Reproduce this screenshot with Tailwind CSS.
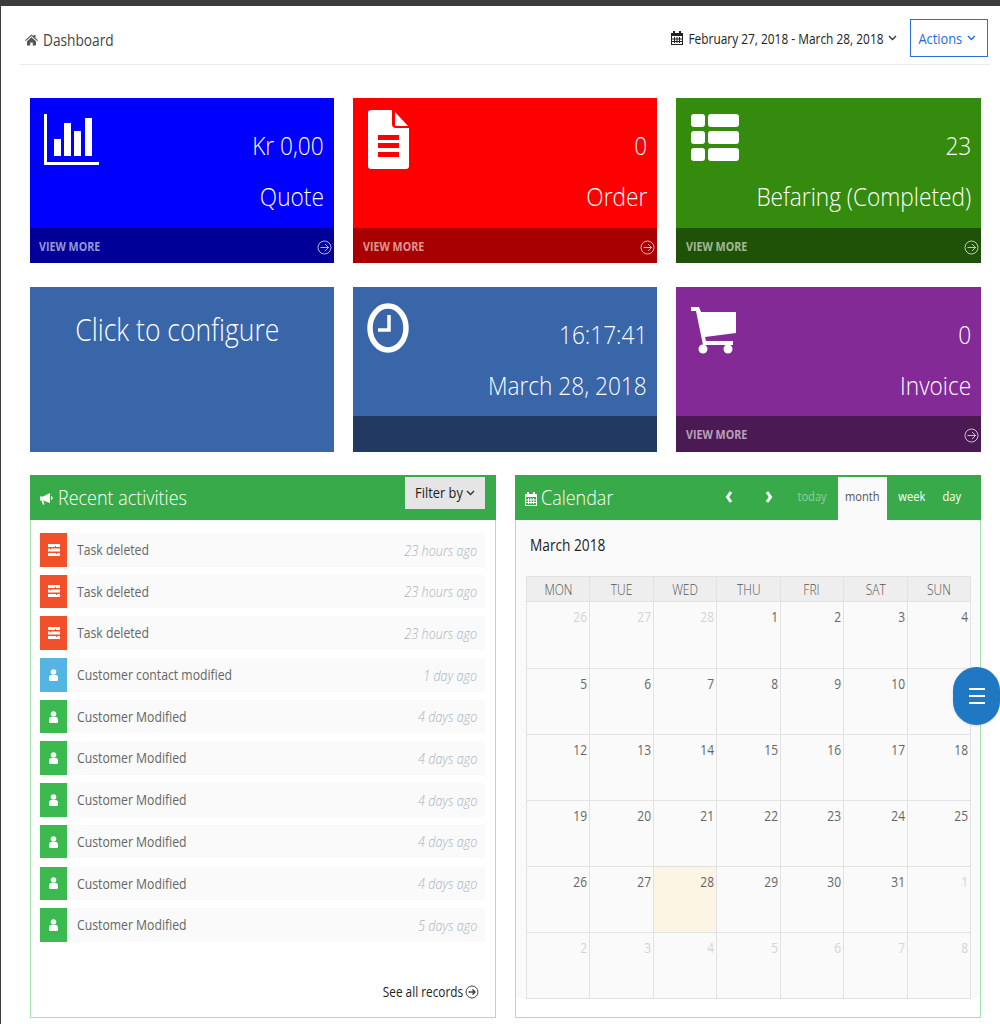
<!DOCTYPE html>
<html lang="en">
<head>
<meta charset="UTF-8">
<title>Dashboard</title>
<script src="https://cdn.jsdelivr.net/npm/@tailwindcss/browser@4"></script>
</head>
<body class="bg-white font-['Open_Sans',sans-serif] text-[#333] overflow-hidden">
<div class="relative w-[1000px] h-[1024px] overflow-hidden border-l border-[#3d3d3d]">
  <div class="h-[6px] bg-[#3d3d3d] -ml-px"></div>
  <!-- sliver of the side menu -->
  <div class="absolute -left-px top-[29px] w-px h-[12px] bg-[#e74c3c]"></div>
  <div class="absolute -left-px top-[67px] w-px h-[11px] bg-[#e74c3c]"></div>
  <!-- page head -->
  <div class="ml-[19px] w-[970px] h-[59px] border-b border-[#e7ecf1] flex items-center justify-between">
    <div class="flex items-center gap-[5px] pl-[5px] pt-[9px] text-[16px] text-[#444]">
      <svg class="w-[13px] h-[12px] fill-[#555]" viewBox="0 0 26 24"><path d="M13 1 0 12.500l1.500 1.700L13 4l11.500 10.200 1.500-1.700L21 8V2h-4v2.500zM4 14.500V23h6.500v-6h5v6H22v-8.500L13 6.500z"/></svg>
      <span class="inline-block whitespace-nowrap origin-left scale-x-[.855]">Dashboard</span>
    </div>
    <div class="flex items-center pt-[6px] pr-[2px]">
      <svg class="w-[12px] h-[14px] fill-[#222] -mr-[29px]" viewBox="0 0 12 14"><path d="M0 2h2V0h2v2h4V0h2v2h2v12H0zM1 5v8h10V5zM3 6h1v6H3zM5.500 6h1v6h-1zM8 6h1v6H8zM1 7.500h10v1H1zM1 10h10v1H1z"/></svg>
      <span class="inline-block whitespace-nowrap origin-right scale-x-[.85] text-[14px] text-[#222]">February 27, 2018 - March 28, 2018</span>
      <svg class="w-[9px] h-[6px] ml-[5px] mr-[13px] stroke-[#333] fill-none" stroke-width="1.400" viewBox="0 0 9 6"><path d="M1 1l3.500 3.500L8 1"/></svg>
      <div class="w-[78px] h-[38px] border-[1.500px] border-[#2a6fe0] flex items-center justify-end pr-[11px] gap-[5px] text-[15px] text-[#1f6ae8]">
        <span class="inline-block whitespace-nowrap origin-right scale-x-[.855]">Actions</span>
        <svg class="w-[9px] h-[6px] stroke-[#1f6ae8] fill-none" stroke-width="1.400" viewBox="0 0 9 6"><path d="M1 1l3.500 3.500L8 1"/></svg>
      </div>
    </div>
  </div>

  <div class="ml-[29px] w-[951px] mt-[33px]">
    <!-- tiles -->
    <div class="grid grid-cols-[304px_304px_305px] gap-x-[19px] gap-y-[24px]">
      <div class="h-[165px] bg-[#0000ff] flex flex-col text-white">
        <div class="flex-1 relative flex flex-col items-end pr-[10px] pt-[29px] text-[26.500px] font-light leading-[36px] gap-[15px]">
          <svg class="absolute left-[14px] top-[16px] w-[55px] h-[51px] fill-white" viewBox="0 0 55 51"><path d="M0 0h3v48h52v3H0zM10 25h7v17h-7zM20 9h7v33h-7zM30 17h7v25h-7zM41 4h7v38h-7z"/></svg>
          <span class="inline-block whitespace-nowrap origin-right scale-x-[.855]">Kr 0,00</span><span class="inline-block whitespace-nowrap origin-right scale-x-[.855]">Quote</span>
        </div>
        <div class="h-[35px] bg-[#000099] flex items-center justify-between pl-[9px] pr-[2px] pt-[3px] text-[12.500px] font-bold text-white/60">
          <span class="inline-block whitespace-nowrap origin-left scale-x-[.855]">VIEW MORE</span>
          <svg class="w-[15px] h-[15px] stroke-white/70 fill-none" viewBox="0 0 15 15"><circle cx="7.500" cy="7.500" r="6.500"/><path d="M3.500 7.500h8M8 4l3.500 3.500L8 11"/></svg>
        </div>
      </div>
      <div class="h-[165px] bg-[#ff0000] flex flex-col text-white">
        <div class="flex-1 relative flex flex-col items-end pr-[10px] pt-[29px] text-[26.500px] font-light leading-[36px] gap-[15px]">
          <svg class="absolute left-[15px] top-[12px] w-[41px] h-[59px] fill-white" viewBox="0 0 41 59"><path fill-rule="evenodd" d="M3 0h21v14a4 4 0 0 0 4 4h13v38a3 3 0 0 1-3 3H3a3 3 0 0 1-3-3V3a3 3 0 0 1 3-3zM10 25v5h21v-5zM10 33v5h21v-5zM10 42v5h21v-5z"/><path d="M27 2l13 14H27z"/></svg>
          <span class="inline-block whitespace-nowrap origin-right scale-x-[.855]">0</span><span class="inline-block whitespace-nowrap origin-right scale-x-[.855]">Order</span>
        </div>
        <div class="h-[35px] bg-[#a80000] flex items-center justify-between pl-[10px] pr-[2px] pt-[3px] text-[12.500px] font-bold text-white/60">
          <span class="inline-block whitespace-nowrap origin-left scale-x-[.855]">VIEW MORE</span>
          <svg class="w-[15px] h-[15px] stroke-white/70 fill-none" viewBox="0 0 15 15"><circle cx="7.500" cy="7.500" r="6.500"/><path d="M3.500 7.500h8M8 4l3.500 3.500L8 11"/></svg>
        </div>
      </div>
      <div class="h-[165px] bg-[#358b0d] flex flex-col text-white">
        <div class="flex-1 relative flex flex-col items-end pr-[10px] pt-[29px] text-[26.500px] font-light leading-[36px] gap-[15px]">
          <svg class="absolute left-[15px] top-[16px] w-[48px] h-[47px] fill-white" viewBox="0 0 48 47"><rect width="14" height="13" rx="3"/><rect x="17" width="31" height="13" rx="3"/><rect y="17" width="14" height="13" rx="3"/><rect x="17" y="17" width="31" height="13" rx="3"/><rect y="34" width="14" height="13" rx="3"/><rect x="17" y="34" width="31" height="13" rx="3"/></svg>
          <span class="inline-block whitespace-nowrap origin-right scale-x-[.855]">23</span><span class="inline-block whitespace-nowrap origin-right scale-x-[.855]">Befaring (Completed)</span>
        </div>
        <div class="h-[35px] bg-[#1f5206] flex items-center justify-between pl-[10px] pr-[2px] pt-[3px] text-[12.500px] font-bold text-white/60">
          <span class="inline-block whitespace-nowrap origin-left scale-x-[.855]">VIEW MORE</span>
          <svg class="w-[15px] h-[15px] stroke-white/70 fill-none" viewBox="0 0 15 15"><circle cx="7.500" cy="7.500" r="6.500"/><path d="M3.500 7.500h8M8 4l3.500 3.500L8 11"/></svg>
        </div>
      </div>
      <div class="h-[165px] bg-[#3966a8] flex justify-center pt-[22px] pr-[10px] text-[31px] leading-[40px] font-light text-white">
        <span class="inline-block h-fit whitespace-nowrap origin-center scale-x-[.855]">Click to configure</span>
      </div>
      <div class="h-[165px] bg-[#3966a8] flex flex-col text-white">
        <div class="flex-1 relative flex flex-col items-end pr-[10px] pt-[29px] text-[26.500px] font-light leading-[36px] gap-[15px]">
          <svg class="absolute left-[14px] top-[16px] w-[42px] h-[50px] fill-none stroke-white" viewBox="0 0 42 50"><ellipse cx="21" cy="25" rx="18" ry="22" stroke-width="5.500"/><path d="M22 12v15H11" stroke-width="3.500"/></svg>
          <span class="inline-block whitespace-nowrap origin-right scale-x-[.855]">16:17:41</span><span class="inline-block whitespace-nowrap origin-right scale-x-[.855]">March 28, 2018</span>
        </div>
        <div class="h-[36px] bg-[#223a62]"></div>
      </div>
      <div class="h-[165px] bg-[#842a96] flex flex-col text-white">
        <div class="flex-1 relative flex flex-col items-end pr-[10px] pt-[29px] text-[26.500px] font-light leading-[36px] gap-[15px]">
          <svg class="absolute left-[15px] top-[20px] w-[46px] h-[47px] fill-white" viewBox="0 0 46 47"><path d="M0 0h8l2 5h35v21l-31 4 1 4h27v4H12L5 4H0z"/><circle cx="12" cy="42" r="4.500"/><circle cx="37" cy="42" r="4.500"/></svg>
          <span class="inline-block whitespace-nowrap origin-right scale-x-[.855]">0</span><span class="inline-block whitespace-nowrap origin-right scale-x-[.855]">Invoice</span>
        </div>
        <div class="h-[36px] bg-[#4b1a54] flex items-center justify-between pl-[10px] pr-[2px] pt-[3px] text-[12.500px] font-bold text-white/60">
          <span class="inline-block whitespace-nowrap origin-left scale-x-[.855]">VIEW MORE</span>
          <svg class="w-[15px] h-[15px] stroke-white/70 fill-none" viewBox="0 0 15 15"><circle cx="7.500" cy="7.500" r="6.500"/><path d="M3.500 7.500h8M8 4l3.500 3.500L8 11"/></svg>
        </div>
      </div>
    </div>

    <!-- panels -->
    <div class="grid grid-cols-2 gap-x-[19px] mt-[23px]">
      <div class="h-[543px] border border-[#a3e6ad] flex flex-col">
        <div class="h-[45px] bg-[#38aa4a] flex items-start justify-between pl-[10px] pr-[11px] -m-px mb-0">
          <div class="flex items-center gap-[5px] h-[45px] text-white text-[21px] font-light">
            <svg class="w-[13px] h-[12px] fill-white mt-[3px]" viewBox="0 0 13 12"><path d="M0 3.500h3l7-3.500v10L3 7.500 4.500 11 3 12 1.500 7.500H0zM11 2.500l2 2.500-2 2.500z"/></svg>
            <span class="inline-block whitespace-nowrap origin-left scale-x-[.855]">Recent activities</span>
          </div>
          <div class="mt-[2px] w-[80px] h-[32px] bg-[#e5e5e5] flex items-center justify-end pr-[10px] pb-[1px] gap-[3px] text-[15px] text-[#222]">
            <span class="inline-block whitespace-nowrap origin-right scale-x-[.855]">Filter by</span>
            <svg class="w-[9px] h-[6px] stroke-[#333] fill-none" stroke-width="1.400" viewBox="0 0 9 6"><path d="M1 1l3.500 3.500L8 1"/></svg>
          </div>
        </div>
        <div id="feed" class="flex-1 flex flex-col gap-[8.200px] pt-[13px] pl-[9px] pr-[10px]"></div>
        <div class="h-[36px] flex items-start justify-end gap-[2px] pr-[16px] text-[14px] text-[#222]">
          <span class="inline-block whitespace-nowrap origin-right scale-x-[.845]">See all records</span>
          <svg class="w-[14px] h-[14px] mt-[4px] stroke-[#444] fill-none" viewBox="0 0 14 14"><circle cx="7" cy="7" r="6"/><path d="M3.500 7h7M7.500 4.500 10 7l-2.500 2.500" stroke-width="1.500"/></svg>
        </div>
      </div>

      <div class="h-[543px] border border-[#a3e6ad] flex flex-col">
        <div class="h-[45px] bg-[#38aa4a] flex items-end -m-px mb-0 pl-[10px] pr-[10px]">
          <div class="flex items-center gap-[4px] h-[45px] text-white text-[21px] font-light">
            <svg class="w-[12px] h-[14px] fill-white mt-[3px]" viewBox="0 0 12 14"><path d="M0 2h2V0h2v2h4V0h2v2h2v12H0zM1 5v8h10V5zM3 6h1v6H3zM5.500 6h1v6h-1zM8 6h1v6H8zM1 7.500h10v1H1zM1 10h10v1H1z"/></svg>
            <span class="inline-block whitespace-nowrap origin-left scale-x-[.855]">Calendar</span>
          </div>
          <div class="ml-auto flex items-end text-[13px] text-white h-[43px]">
            <div class="w-[41px] h-[43px] flex items-center justify-center"><svg class="w-[8px] h-[12px] stroke-white fill-none ml-[4px] mb-[4px]" stroke-width="3" viewBox="0 0 8 12"><path d="M6 1 2.500 6 6 11"/></svg></div>
            <div class="w-[41px] h-[43px] flex items-center justify-center"><svg class="w-[8px] h-[12px] stroke-white fill-none ml-[2px] mb-[4px]" stroke-width="3" viewBox="0 0 8 12"><path d="M2 1l3.500 5L2 11"/></svg></div>
            <div class="w-[50px] h-[43px] flex items-center justify-center pb-[3px] pr-[1px] text-white/45"><span class="inline-block scale-x-[.855]">today</span></div>
            <div class="w-[49px] h-[43px] flex items-center justify-center pb-[3px] bg-[#fafafa] text-[#555]"><span class="inline-block scale-x-[.855]">month</span></div>
            <div class="w-[47px] h-[43px] flex items-center justify-center pb-[3px] pl-[2px]"><span class="inline-block scale-x-[.855]">week</span></div>
            <div class="w-[37px] h-[43px] flex items-center justify-center pb-[3px] pr-[2px]"><span class="inline-block scale-x-[.855]">day</span></div>
          </div>
        </div>
        <div class="flex-1 flex flex-col">
          <div class="bg-[#fafafa] pl-[10px] pr-[9px] pb-px h-[478px]">
            <div class="h-[56px] pl-[4px] pt-[13px] text-[16px] leading-[24px] text-[#222]"><span class="inline-block whitespace-nowrap origin-left scale-x-[.855]">March 2018</span></div>
            <div id="cal" class="border-l border-t border-[#e2e2e2] grid grid-cols-7"></div>
          </div>
        </div>
      </div>
    </div>
  </div>

  <!-- floating menu button -->
  <div class="absolute left-[952px] top-[667px] w-[47px] h-[58px] rounded-full bg-[#1f78c1] flex flex-col items-center justify-center gap-[5px] shadow-sm">
    <span class="w-[16px] h-[2px] bg-white"></span>
    <span class="w-[16px] h-[2px] bg-white"></span>
    <span class="w-[16px] h-[2px] bg-white"></span>
  </div>
</div>

<script>
  // activity feed rows
  const taskIcon = '<svg class="w-[12px] h-[12px] fill-white" viewBox="0 0 12 12"><path d="M0 0h12v3H8V2H7v1H0zM0 4.500h2v1h1v-1h9v3H0zM0 9h8v1h1V9h3v3H0z"/></svg>';
  const userIcon = '<svg class="w-[9px] h-[12px] fill-white" viewBox="0 0 9 12"><circle cx="4.500" cy="3" r="2.800"/><path d="M1.500 6h6Q9 6.500 9 9v1.500Q9 12 7.500 12h-6Q0 12 0 10.500V9q0-2.500 1.500-3z"/></svg>';
  const feed = [
    ['Task deleted', '23 hours ago', 'bg-[#f1512a]', taskIcon],
    ['Task deleted', '23 hours ago', 'bg-[#f1512a]', taskIcon],
    ['Task deleted', '23 hours ago', 'bg-[#f1512a]', taskIcon],
    ['Customer contact modified', '1 day ago', 'bg-[#55b4e4]', userIcon],
    ['Customer Modified', '4 days ago', 'bg-[#3cb94f]', userIcon],
    ['Customer Modified', '4 days ago', 'bg-[#3cb94f]', userIcon],
    ['Customer Modified', '4 days ago', 'bg-[#3cb94f]', userIcon],
    ['Customer Modified', '4 days ago', 'bg-[#3cb94f]', userIcon],
    ['Customer Modified', '4 days ago', 'bg-[#3cb94f]', userIcon],
    ['Customer Modified', '5 days ago', 'bg-[#3cb94f]', userIcon],
  ];
  document.getElementById('feed').innerHTML = feed.map(r =>
    `<div class="h-[33.500px] bg-[#fafafa] flex items-center text-[14.300px]">
       <div class="w-[27px] h-full flex items-center justify-center ${r[2]}">${r[3]}</div>
       <span class="ml-[10px] inline-block whitespace-nowrap origin-left scale-x-[.855] text-[#666]">${r[0]}</span>
       <span class="ml-auto mr-[8px] inline-block whitespace-nowrap origin-right scale-x-[.855] italic font-light text-[14.800px] text-[#a9b3bd]">${r[1]}</span>
     </div>`).join('');

  // calendar grid
  const heads = ['MON', 'TUE', 'WED', 'THU', 'FRI', 'SAT', 'SUN'];
  const days = [26,27,28,1,2,3,4,5,6,7,8,9,10,11,12,13,14,15,16,17,18,19,20,21,22,23,24,25,26,27,28,29,30,31,1,2,3,4,5,6,7,8];
  let html = heads.map(h => `<div class="h-[25px] bg-[#eeeeee] border-r border-b border-[#e2e2e2] flex items-center justify-center text-[14px] font-light text-[#555]"><span class="inline-block scale-x-[.855]">${h}</span></div>`).join('');
  html += days.map((d, i) => {
    const muted = i < 3 || i > 33;
    const today = i === 30;
    const rowH = i < 7 ? 'h-[67px]' : 'h-[66px]';
    return `<div class="${rowH} border-r border-b border-[#e2e2e2] pr-[2px] text-right text-[14px] leading-[30px] ${muted ? 'text-[#d4d4d4]' : 'text-[#666]'} ${today ? 'bg-[#fcf5e3]' : ''}"><span class="inline-block origin-right scale-x-[.855]">${d}</span></div>`;
  }).join('');
  document.getElementById('cal').innerHTML = html;
</script>
</body>
</html>
